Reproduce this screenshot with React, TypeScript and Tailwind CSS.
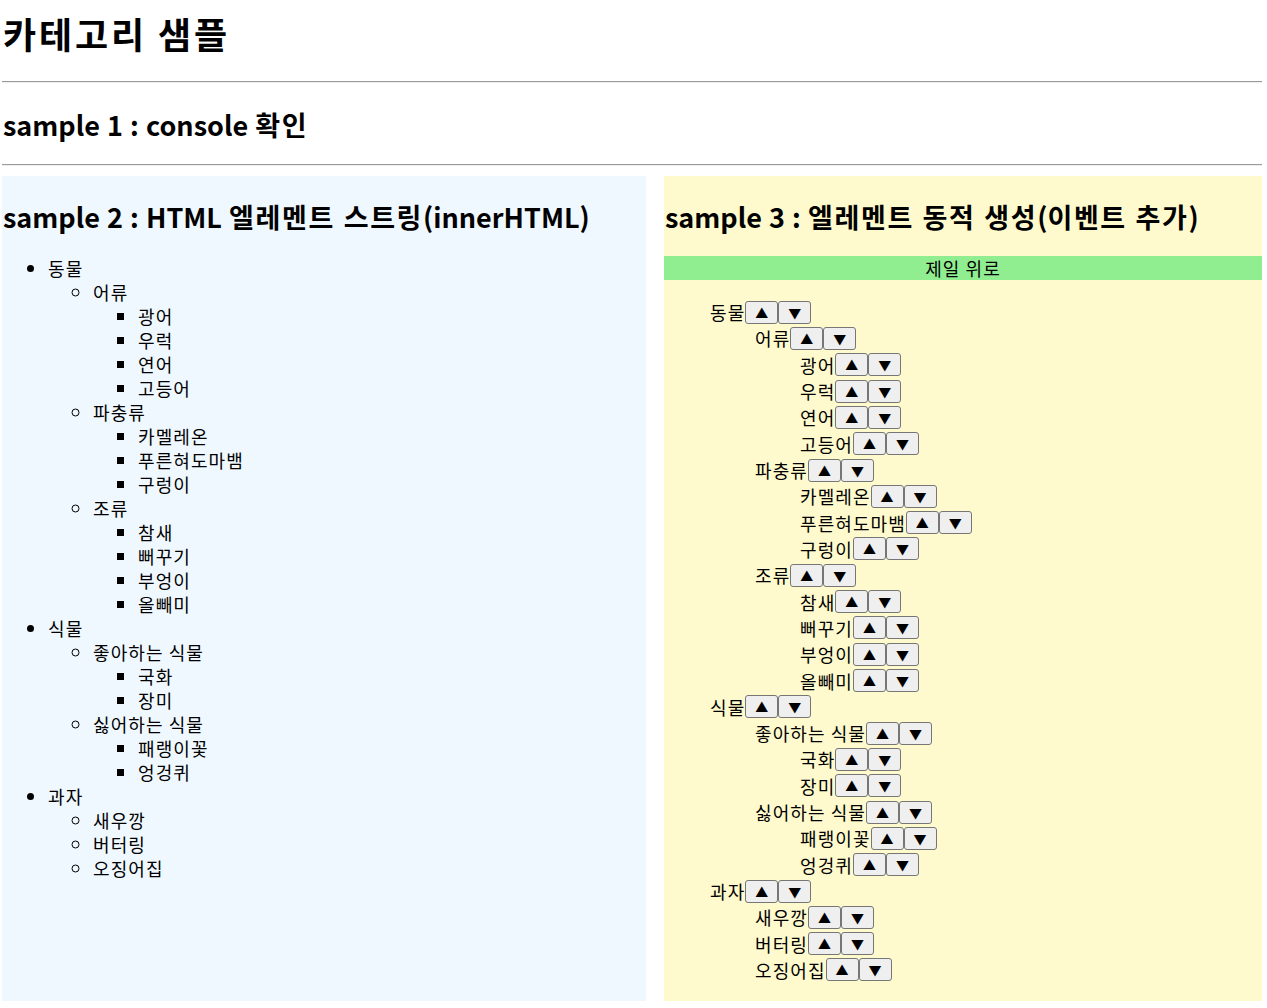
type Node = { name: string; children?: Node[] };

const tree: Node[] = [
  {
    name: "동물",
    children: [
      { name: "어류", children: [{ name: "광어" }, { name: "우럭" }, { name: "연어" }, { name: "고등어" }] },
      { name: "파충류", children: [{ name: "카멜레온" }, { name: "푸른혀도마뱀" }, { name: "구렁이" }] },
      { name: "조류", children: [{ name: "참새" }, { name: "뻐꾸기" }, { name: "부엉이" }, { name: "올빼미" }] },
    ],
  },
  {
    name: "식물",
    children: [
      { name: "좋아하는 식물", children: [{ name: "국화" }, { name: "장미" }] },
      { name: "싫어하는 식물", children: [{ name: "패랭이꽃" }, { name: "엉겅퀴" }] },
    ],
  },
  {
    name: "과자",
    children: [{ name: "새우깡" }, { name: "버터링" }, { name: "오징어집" }],
  },
];

const Hr = () => <div className="h-0 border-t border-b border-t-[#9a9a9a] border-b-[#eeeeee]" />;

const listStyles = ["list-disc", "list-[circle]", "list-[square]"];

// hangul in Noto CJK runs a bit narrower than the original, widen it a touch
const Ko = ({ children }: { children: string }) => <span className="tracking-[0.06em]">{children}</span>;

const HtmlList = ({ nodes, depth }: { nodes: Node[]; depth: number }) => (
  <ul className={`${listStyles[depth] ?? "list-[square]"} ${depth === 0 ? "pl-[46px]" : "pl-[45px]"}`}>
    {nodes.map((n) => (
      <li key={n.name}>
        <Ko>{n.name}</Ko>
        {n.children && <HtmlList nodes={n.children} depth={depth + 1} />}
      </li>
    ))}
  </ul>
);

const ArrowBtn = ({ label }: { label: string }) => (
  <button className="w-[33px] h-[23px] flex items-center justify-center border border-[#767676] rounded-[3px] bg-[#efefef] text-[13px] leading-none text-black">
    {label}
  </button>
);

const TreeRows = ({ nodes }: { nodes: Node[] }) => (
  <div>
    {nodes.map((n) => (
      <div key={n.name}>
        <div className="flex items-center h-[26.32px]">
          <span className="whitespace-pre tracking-[0.06em]">{n.name}</span>
          <ArrowBtn label="▲" />
          <ArrowBtn label="▼" />
        </div>
        {n.children && (
          <div className="pl-[45px]">
            <TreeRows nodes={n.children} />
          </div>
        )}
      </div>
    ))}
  </div>
);

export default function App() {
  return (
    <div
      className="pl-[2px] pr-[5px] pt-[9px] text-[18px] leading-[24px] text-black bg-white"
      style={{ fontFamily: '"Noto Sans CJK KR", "Noto Sans", sans-serif' }}
    >
      <h1 className="text-[36px] leading-[48px] font-bold pl-[1px] tracking-[0.08em]">카테고리 샘플</h1>
      <div className="mt-[24px]">
        <Hr />
      </div>
      <h2 className="mt-[24px] text-[27px] leading-[36px] font-bold pl-[1px] [word-spacing:1px]">
        sample 1 : console <Ko>확인</Ko>
      </h2>
      <div className="mt-[21px]">
        <Hr />
      </div>
      <div className="mt-[10px] flex gap-[18px] h-[825px]">
        <div className="w-[644px] bg-[#f0f8ff]">
          <h2 className="mt-[23px] text-[27px] leading-[36px] font-bold pl-[1px] [word-spacing:1px]">
            sample 2 : HTML <Ko>엘레멘트 스트링</Ko>(innerHTML)
          </h2>
          <div className="mt-[21px]">
            <HtmlList nodes={tree} depth={0} />
          </div>
        </div>
        <div className="flex-1 bg-[#fffacd]">
          <h2 className="mt-[23px] text-[27px] leading-[36px] font-bold pl-[1px] [word-spacing:1px]">
            sample 3 : <Ko>엘레멘트 동적 생성</Ko>(<Ko>이벤트 추가</Ko>)
          </h2>
          <div className="mt-[21px] h-[24px] bg-[#90ee90] text-center leading-[24px]">
            <Ko>제일 위로</Ko>
          </div>
          <div className="mt-[19px] pl-[46px]">
            <TreeRows nodes={tree} />
          </div>
        </div>
      </div>
    </div>
  );
}
